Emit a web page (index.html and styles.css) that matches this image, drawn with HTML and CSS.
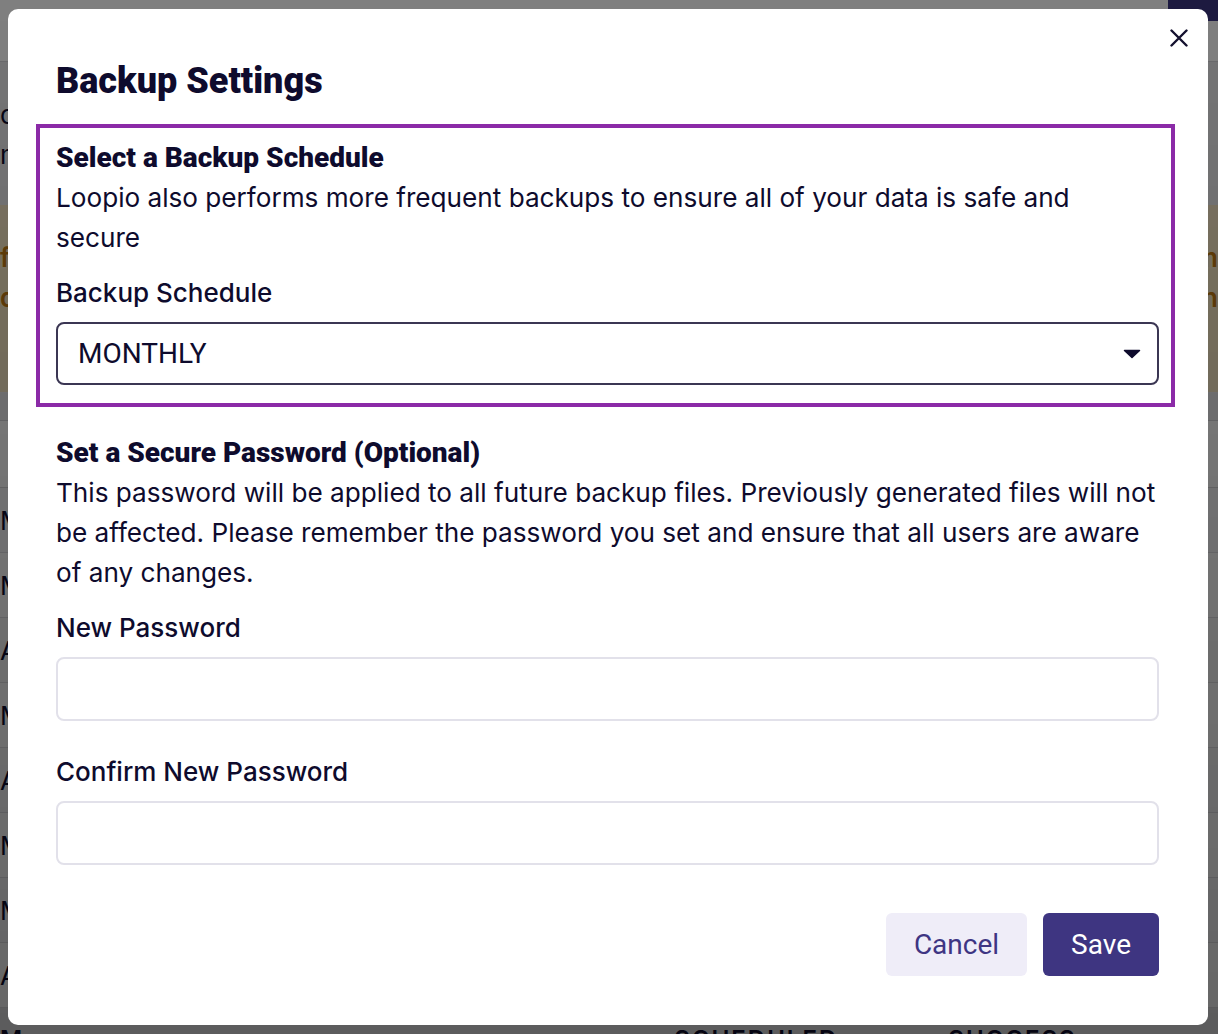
FILE: index.html
```html
<!DOCTYPE html>
<html lang="en">
<head>
    <meta charset="UTF-8">
    <meta name="viewport" content="width=device-width, initial-scale=1.0">
    <title>Backup Settings</title>
    <link rel="stylesheet" href="styles.css">
</head>
<body>
    <!-- page behind the dialog -->
    <div class="page">
        <header class="page-header">
            <span class="header-btn"></span>
        </header>
        <div class="page-intro">
            <p>data backups</p>
            <p>monthly files</p>
        </div>
        <div class="page-alert">
            <div class="alert-row"><span>file</span><span>m</span></div>
            <div class="alert-row"><span>download</span><span>n</span></div>
        </div>
        <div class="page-table">
            <div class="table-head"></div>
            <div class="table-row">MONTHLY</div>
            <div class="table-row">MONTHLY</div>
            <div class="table-row">ANNUALLY</div>
            <div class="table-row">MONTHLY</div>
            <div class="table-row">ANNUALLY</div>
            <div class="table-row">MONTHLY</div>
            <div class="table-row">MONTHLY</div>
            <div class="table-row">ANNUALLY</div>
            <div class="table-foot">
                <span class="foot-first">M</span>
                <span class="foot-sched">SCHEDULED</span>
                <span class="foot-status">SUCCESS</span>
            </div>
        </div>
    </div>

    <div class="overlay"></div>

    <div class="modal-wrap">
        <div class="modal">
            <button class="modal-close" aria-label="Close">
                <svg width="18" height="18" viewBox="0 0 18 18">
                    <path d="M1.5 1.5l15 15M16.5 1.5l-15 15" stroke="currentColor" stroke-width="2.4" stroke-linecap="round"/>
                </svg>
            </button>

            <h1 class="modal-title">Backup Settings</h1>

            <section class="schedule-box">
                <h2 class="section-title">Select a Backup Schedule</h2>
                <p class="section-text">Loopio also performs more frequent backups to ensure all of your data is safe and secure</p>
                <div class="field-label">Backup Schedule</div>
                <div class="select">
                    <span>MONTHLY</span>
                    <svg width="18" height="10" viewBox="0 0 18 10">
                        <path d="M1.5 1.5h15l-7.5 7z" fill="currentColor" stroke="currentColor" stroke-width="1.5" stroke-linejoin="round"/>
                    </svg>
                </div>
            </section>

            <section class="password-box">
                <h2 class="section-title">Set a Secure Password (Optional)</h2>
                <p class="section-text">This password will be applied to all future backup files. Previously generated files will not be affected. Please remember the password you set and ensure that all users are aware of any changes.</p>
                <div class="field-label">New Password</div>
                <input class="text-input" type="password">
                <div class="field-label field-label-next">Confirm New Password</div>
                <input class="text-input" type="password">
            </section>

            <div class="modal-actions">
                <button class="btn btn-cancel">Cancel</button>
                <button class="btn btn-save">Save</button>
            </div>
        </div>
    </div>
</body>
</html>
```

FILE: styles.css
```css
body {
    margin: 0;
    font-family: Inter, "Noto Sans", sans-serif;
    color: #0e0b2d;
    background-color: #ebebed;
    overflow: hidden;
}

/* ---- page behind the dialog ---- */
.page {
    height: 1034px;
}

.page-header {
    height: 61px;
    background: #fff;
    border-bottom: 1px solid #d4d4d8;
    display: flex;
    justify-content: flex-end;
}
.header-btn {
    width: 50px;
    height: 21px;
    background: #3a3480;
}

.page-intro {
    padding-top: 33px;
    font-size: 26px;
    line-height: 40px;
}
.page-intro p {
    margin: 0;
}

.page-alert {
    margin-top: 30px;
    height: 187px;
    padding-top: 33px;
    box-sizing: border-box;
    background: #f6e7c4;
    color: #c27a12;
    font-size: 26px;
    font-weight: 600;
    line-height: 40px;
}
.alert-row {
    display: flex;
    justify-content: space-between;
}

.page-table {
    margin-top: 28px;
    background: #fff;
}
.table-head {
    height: 68px;
    border-top: 1px solid #d4d4d8;
    border-bottom: 1px solid #d4d4d8;
    box-sizing: border-box;
}
.table-row {
    height: 65px;
    line-height: 65px;
    font-size: 26px;
    border-bottom: 1px solid #dedee2;
    box-sizing: border-box;
}
.table-row:nth-child(even) {
    background: #f7f7f9;
}
.table-foot {
    height: 60px;
    padding-top: 17px;
    box-sizing: border-box;
    background: #e6e6e8;
    display: flex;
    font-size: 24px;
    letter-spacing: 2px;
    font-weight: 600;
}
.foot-sched { margin-left: 650px; }
.foot-status { margin-left: 110px; }

.overlay {
    position: fixed;
    inset: 0;
    background: linear-gradient(rgba(0, 0, 0, 0.5), rgba(0, 0, 0, 0.6));
}

/* ---- dialog ---- */
.modal-wrap {
    position: fixed;
    inset: 0;
    padding-left: 8px;
    display: flex;
    align-items: center;
}

.modal {
    position: relative;
    width: 1200px;
    box-sizing: border-box;
    padding: 52px 49px 49px 48px;
    background: #fff;
    border-radius: 10px;
}

.modal-close {
    position: absolute;
    top: 20px;
    right: 20px;
    padding: 0;
    border: none;
    background: transparent;
    color: #14112f;
    cursor: pointer;
    display: flex;
}

.modal-title {
    margin: 0;
    font-family: Roboto, "Liberation Sans", sans-serif;
    font-size: 36px;
    font-weight: 900;
    line-height: 40px;
}

.schedule-box {
    margin: 23px -16px 0 -20px;
    padding: 10px 12px 18px 16px;
    border: 4px solid #8b2aa7;
}

.password-box {
    margin-top: 26px;
}

.section-title {
    margin: 0;
    font-family: Roboto, "Liberation Sans", sans-serif;
    font-size: 28px;
    font-weight: 900;
    line-height: 40px;
}

.section-text {
    margin: 0;
    font-size: 26.15px;
    line-height: 40px;
}

.field-label {
    margin-top: 15px;
    font-size: 26px;
    font-weight: 500;
    line-height: 40px;
}
.field-label-next {
    margin-top: 31px;
}

.select {
    margin-top: 9px;
    height: 63px;
    box-sizing: border-box;
    padding: 0 16px 0 20px;
    border: 2px solid #3b3653;
    border-radius: 8px;
    display: flex;
    align-items: center;
    justify-content: space-between;
    font-family: Roboto, "Liberation Sans", sans-serif;
    font-size: 28px;
}

.text-input {
    display: block;
    width: 100%;
    height: 64px;
    margin: 9px 0 0;
    box-sizing: border-box;
    border: 2px solid #e2e1ea;
    border-radius: 8px;
    background: #fff;
    font-size: 24px;
}

.modal-actions {
    margin-top: 48px;
    display: flex;
    justify-content: flex-end;
    gap: 16px;
}

.btn {
    height: 63px;
    padding: 0 28px;
    border: none;
    border-radius: 6px;
    font-family: Roboto, "Liberation Sans", sans-serif;
    font-size: 28px;
    cursor: pointer;
}
.btn-cancel {
    background: #efedf8;
    color: #3e3583;
}
.btn-save {
    background: #3e3581;
    color: #fff;
}
```
